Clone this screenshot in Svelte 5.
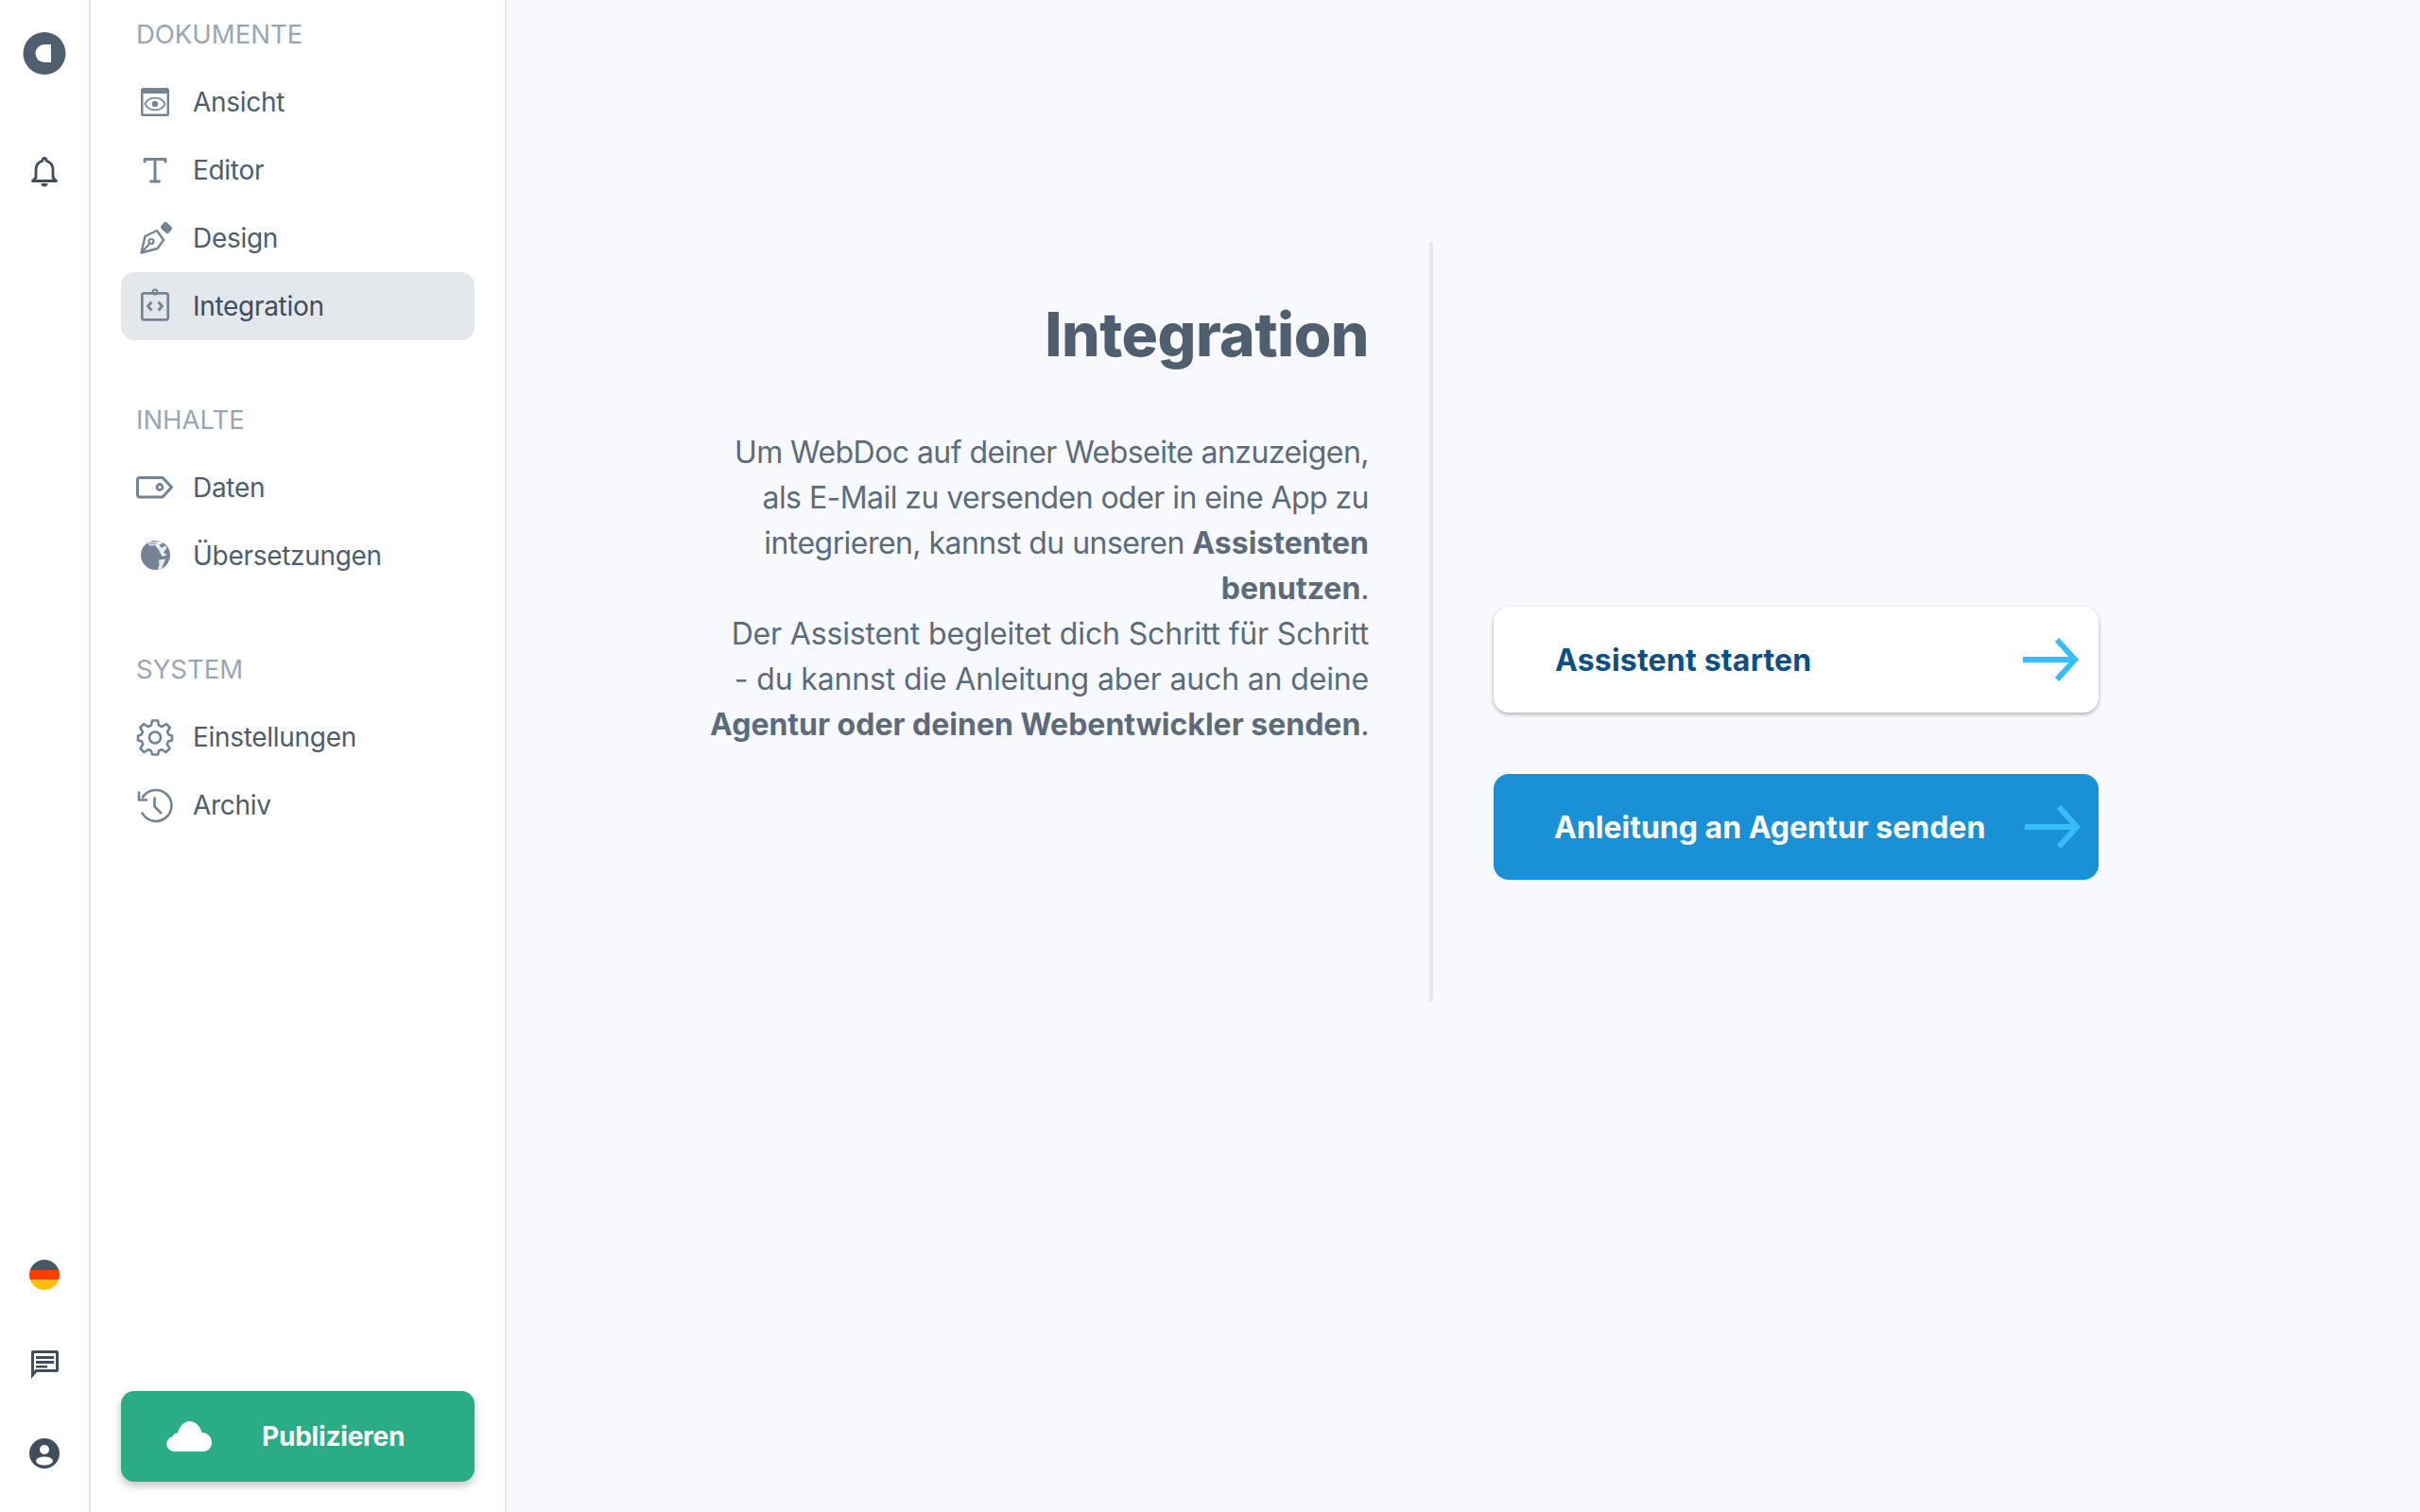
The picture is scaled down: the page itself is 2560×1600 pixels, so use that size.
<script>
    const groups = [
        {
            title: "DOKUMENTE",
            items: [
                { id: "view", label: "Ansicht" },
                { id: "editor", label: "Editor" },
                { id: "design", label: "Design" },
                { id: "integration", label: "Integration", active: true }
            ]
        },
        {
            title: "INHALTE",
            items: [
                { id: "data", label: "Daten" },
                { id: "globe", label: "Übersetzungen" }
            ]
        },
        {
            title: "SYSTEM",
            items: [
                { id: "gear", label: "Einstellungen" },
                { id: "history", label: "Archiv" }
            ]
        }
    ]
</script>

{#snippet arrow()}
    <svg class="arrow" viewBox="0 0 60 46" fill="none">
        <path d="M0 23H55M36 2L55 23 36 44" stroke="#38bdf8" stroke-width="6"/>
    </svg>
{/snippet}

<div class="app">
    <aside class="rail">
        <div class="rail-top">
            <svg class="logo" viewBox="0 0 46 46">
                <circle cx="23" cy="22.5" r="22.500" fill="#4f5f6f"/>
                <path d="M30 13H23a9.500 9.500 0 0 0 0 19H30Z" fill="#fff"/>
            </svg>
            <svg class="rail-icon" viewBox="0 0 32 32" fill="none">
                <path d="M16 1.500a2 2 0 0 1 2 2.600C22.500 5.500 25 9.500 25 14V22L28.500 25.500H3.500L7 22V14C7 9.500 9.500 5.500 14 4.100A2 2 0 0 1 16 1.500Z" stroke="#3f4d5c" stroke-width="2.800" stroke-linejoin="round"/>
                <path d="M12.500 28h7a3.500 3.500 0 0 1-7 0Z" fill="#3f4d5c"/>
            </svg>
        </div>
        <div class="rail-bottom">
            <svg class="rail-icon flag" viewBox="0 0 32 32">
                <clipPath id="flag"><circle cx="16" cy="16" r="16"/></clipPath>
                <g clip-path="url(#flag)">
                    <rect width="32" height="11" fill="#455a64"/>
                    <rect y="11" width="32" height="10.500" fill="#ff3d00"/>
                    <rect y="21.500" width="32" height="10.500" fill="#ffc107"/>
                </g>
            </svg>
            <svg class="rail-icon" viewBox="0 0 32 32">
                <path d="M4 1H29a2 2 0 0 1 2 2V22a2 2 0 0 1-2 2H8L2 31V3A2 2 0 0 1 4 1Z" fill="#3f4d5c"/>
                <path d="M5 4H28V21H6.800L5 23Z" fill="#fff"/>
                <path d="M7 7H26V10H7ZM7 12H26V15H7ZM7 17H19V19.500H7Z" fill="#3f4d5c"/>
            </svg>
            <svg class="rail-icon" viewBox="0 0 32 32">
                <circle cx="16" cy="16" r="16" fill="#3f4d5c"/>
                <circle cx="16" cy="12" r="5" fill="#fff"/>
                <ellipse cx="16" cy="24" rx="9" ry="4.500" fill="#fff"/>
            </svg>
        </div>
    </aside>

    <aside class="sidebar">
        <nav>
            {#each groups as group}
                <section>
                    <h4>{group.title}</h4>
                    {#each group.items as item}
                        <div class="item" class:active={item.active}>
                            <svg class="icon" viewBox="0 0 40 40" fill="none">
                                {#if item.id === "view"}
                                    <rect x="5" y="5" width="30" height="30" rx="2.500" fill="#748494"/>
                                    <rect x="7.500" y="11" width="25" height="21.500" fill="#fff"/>
                                    <path d="M9.500 22C13 13.500 27 13.500 30.500 22 27 30.500 13 30.500 9.500 22Z" stroke="#748494" stroke-width="1.800"/>
                                    <circle cx="20" cy="22" r="3.200" fill="#748494"/>
                                {:else if item.id === "editor"}
                                    <path d="M9 11V8.500H31V11M20 8.500V31.500M15.500 32H24.500" stroke="#748494" stroke-width="3" stroke-linecap="round" stroke-linejoin="round"/>
                                {:else if item.id === "design"}
                                    <path d="M5.500 35.500L9.500 18 22 12 29 22 22.500 31Z" stroke="#748494" stroke-width="2.400" stroke-linejoin="round"/>
                                    <path d="M5.500 35.500L15 25" stroke="#748494" stroke-width="2.200"/>
                                    <circle cx="16" cy="23.500" r="2.500" stroke="#748494" stroke-width="2.200"/>
                                    <rect x="26.500" y="4.500" width="11" height="9" rx="2.500" transform="rotate(42 32 9)" fill="#748494"/>
                                {:else if item.id === "integration"}
                                    <rect x="6.300" y="6.300" width="27.400" height="28" rx="2" stroke="#748494" stroke-width="2.700"/>
                                    <circle cx="20" cy="5" r="2.500" stroke="#748494" stroke-width="2"/>
                                    <path d="M16.500 15.500L12.500 20 16.500 24.500M23.500 15.500L27.500 20 23.500 24.500" stroke="#748494" stroke-width="2.800"/>
                                {:else if item.id === "data"}
                                    <path d="M3.500 9.500H28L37.500 19.500 28 30H3.500A2.500 2.500 0 0 1 1.500 27.500V12A2.500 2.500 0 0 1 3.500 9.500Z" stroke="#748494" stroke-width="3" stroke-linejoin="round"/>
                                    <circle cx="25" cy="19.500" r="3" stroke="#748494" stroke-width="2.800"/>
                                {:else if item.id === "globe"}
                                    <circle cx="20.500" cy="19.500" r="15.500" fill="#748494"/>
                                    <path d="M12 7.500C16 3.500 25 3.500 28.500 6 27 8 25.500 8.500 24 8L27 12 30.500 9.500 32.500 11.500 29 17 33 19 27.500 21 24 14 20 9 15 9.500Z" fill="#e9ebef"/>
                                    <path d="M16 5.500L23 5.200M14 7.500L21 7.500" stroke="#748494" stroke-width="0.800"/>
                                    <path d="M24 24.500L31 23.500 27 33.500 23 34.800 24.500 29.500Z" fill="#e9ebef"/>
                                {:else if item.id === "gear"}
                                    <path d="M17 2.500H23L24 7.500 27.500 9 32 6.200 35.800 10 33 14.500 34.500 17.500 38 18.500V23.500L34 24.500 32.800 27.500 35.500 32 31.500 36 27 33.200 24 34.500 23 38.500H17L16 34.500 13 33.200 8.500 36 4.500 32 7.200 27.500 6 24.500 2 23.500V18.500L5.500 17.500 7 14.500 4.200 10 8 6.200 12.500 9 16 7.500Z" stroke="#748494" stroke-width="2.600" stroke-linejoin="round"/>
                                    <circle cx="20" cy="20.500" r="6" stroke="#748494" stroke-width="2.600"/>
                                {:else if item.id === "history"}
                                    <path d="M6.500 12.500A16.500 16.500 0 1 1 6 27.500" stroke="#748494" stroke-width="2.600"/>
                                    <path d="M3 5.500V14.500H12" stroke="#748494" stroke-width="2.600"/>
                                    <path d="M19.500 11.500V21.500L27 29" stroke="#748494" stroke-width="2.600"/>
                                {/if}
                            </svg>
                            <span>{item.label}</span>
                        </div>
                    {/each}
                </section>
            {/each}
        </nav>
        <button class="publish">
            <svg class="cloud" viewBox="0 0 48 32">
                <path d="M8 32A8 8 0 0 1 6.500 16.200C7.500 13 10 12 12 12.500 14 4 20 0 24 0 31 0 36 5 37.500 12 43.500 12 48 16.500 48 22.500 48 28 44 32 39 32Z" fill="#fff"/>
            </svg>
            <span>Publizieren</span>
        </button>
    </aside>

    <main>
        <div class="intro">
            <h1>Integration</h1>
            <p>
                Um WebDoc auf deiner Webseite anzuzeigen,<br>
                als E-Mail zu versenden oder in eine App zu<br>
                integrieren, kannst du unseren <b>Assistenten<br>
                benutzen</b>.<br>
                <span class="wide">Der Assistent begleitet dich Schritt für Schritt<br>
                - du kannst die Anleitung aber auch an deine</span><br>
                <b>Agentur oder deinen Webentwickler senden</b>.
            </p>
        </div>
        <div class="actions">
            <button class="action start"><span>Assistent starten</span>{@render arrow()}</button>
            <button class="action send"><span>Anleitung an Agentur senden</span>{@render arrow()}</button>
        </div>
    </main>
</div>

<style>
    :global(body) {
        background: #f8f9fd;
        font-family: Inter, sans-serif;
    }

    .app {
        display: flex;
        height: 100vh;
        overflow: hidden;
    }

    .rail {
        box-sizing: border-box;
        width: 96px;
        flex: none;
        display: flex;
        flex-direction: column;
        justify-content: space-between;
        align-items: center;
        background: #fff;
        border-right: 2px solid #e5e8ee;
        padding: 34px 0 46px;
    }

    .rail-top,
    .rail-bottom {
        display: flex;
        flex-direction: column;
        align-items: center;
        gap: 62px;
    }

    .rail-top {
        gap: 86px;
    }

    .flag {
        margin-bottom: 1px;
    }

    .logo {
        width: 46px;
        height: 46px;
    }

    .rail-icon {
        width: 32px;
        height: 32px;
        display: block;
    }

    .sidebar {
        box-sizing: border-box;
        width: 440px;
        flex: none;
        display: flex;
        flex-direction: column;
        justify-content: space-between;
        background: #fff;
        border-right: 2px solid #e5e8ee;
        padding: 0 32px 32px 32px;
    }

    nav {
        display: flex;
        flex-direction: column;
        gap: 48px;
    }

    h4 {
        margin: 0;
        height: 72px;
        line-height: 73px;
        padding-left: 16px;
        font-size: 27.500px;
        font-weight: 400;
        color: #9aa6b3;
    }

    .item {
        display: flex;
        align-items: center;
        gap: 20px;
        height: 72px;
        padding-left: 16px;
        border-radius: 14px;
        font-size: 28px;
        letter-spacing: -0.3px;
        color: #4d5d6d;
    }

    .item.active {
        background: #e4e7ec;
        color: #3f4d5c;
    }

    .icon {
        width: 40px;
        height: 40px;
        flex: none;
    }

    button {
        font-family: inherit;
        border: none;
        padding: 0;
    }

    .publish {
        display: flex;
        align-items: center;
        height: 96px;
        padding-left: 48px;
        gap: 53px;
        border-radius: 14px;
        background: #2aad84;
        color: #fff;
        font-size: 28px;
        font-weight: 700;
        letter-spacing: -0.2px;
        box-shadow: 0 4px 10px rgba(0, 0, 0, 0.25);
    }

    .cloud {
        width: 48px;
        height: 32px;
    }

    main {
        flex: 1;
        display: flex;
        align-items: flex-start;
        padding-top: 256px;
    }

    .intro {
        box-sizing: border-box;
        width: 980px;
        height: 804px;
        padding: 64px 64px 0 0;
        border-right: 4px solid #e4e7ec;
        text-align: right;
        color: #5c6b7b;
    }

    h1 {
        margin: 0;
        font-size: 64px;
        line-height: 68px;
        font-weight: 800;
        letter-spacing: -0.5px;
        color: #4f5f6f;
    }

    p {
        margin: 67px 0 0;
        font-size: 32px;
        line-height: 48px;
        letter-spacing: -0.55px;
        white-space: nowrap;
    }

    p b {
        letter-spacing: 0;
    }

    .wide {
        letter-spacing: -0.15px;
    }

    .actions {
        display: flex;
        flex-direction: column;
        gap: 65px;
        margin: 386px 0 0 64px;
    }

    .action {
        box-sizing: border-box;
        display: flex;
        align-items: center;
        justify-content: space-between;
        width: 640px;
        height: 112px;
        padding: 0 20px 0 65px;
        border-radius: 16px;
        font-size: 32px;
        font-weight: 700;
    }

    .start {
        background: #fff;
        color: #0b4f85;
        letter-spacing: 0.2px;
        box-shadow: 0 2px 4px rgba(0, 0, 0, 0.3);
    }

    .send {
        background: #1a91d6;
        color: #fff;
        padding: 0 18px 0 64px;
    }

    .arrow {
        width: 60px;
        height: 46px;
    }
</style>
